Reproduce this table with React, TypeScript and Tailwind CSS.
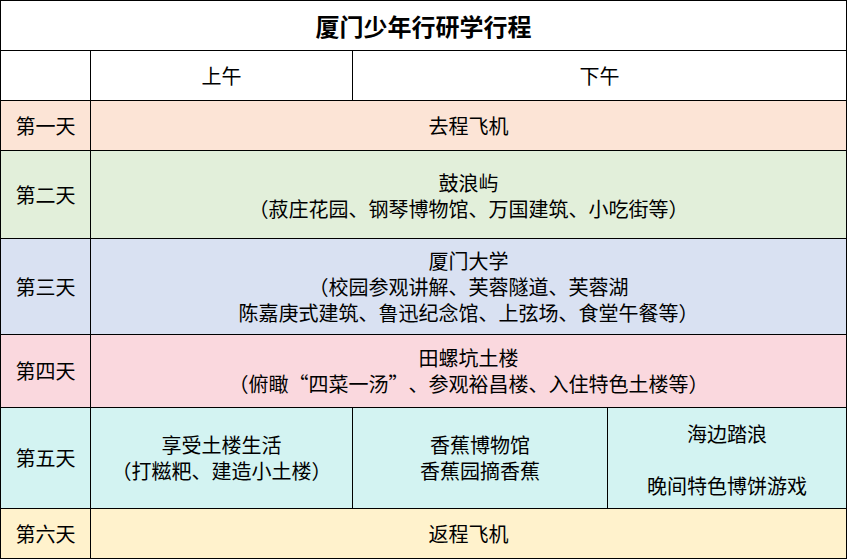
const font = { fontFamily: '"Noto Sans CJK SC", "Noto Sans", sans-serif' };

const cell = "flex flex-col items-center justify-center text-center text-[20px] leading-[26px] text-black";

const days = [
  { label: "第一天", bg: "bg-[#fce4d6]" },
  { label: "第二天", bg: "bg-[#e2efda]" },
  { label: "第三天", bg: "bg-[#d9e1f2]" },
  { label: "第四天", bg: "bg-[#fad8de]" },
  { label: "第五天", bg: "bg-[#d3f3f2]" },
  { label: "第六天", bg: "bg-[#fff2cc]" },
];

export default function App() {
  return (
    <div style={font} className="w-[847px] h-[559px] bg-white">
      <div className="grid grid-cols-[89px_261px_254px_238px] grid-rows-[49px_49px_49px_87px_95px_72px_100px_49px] gap-px bg-black p-px w-[847px] h-[559px]">
        <div className="col-span-4 flex items-center justify-center bg-white text-[24px] font-bold">
          厦门少年行研学行程
        </div>

        <div className="bg-white" />
        <div className={`${cell} bg-white`}>上午</div>
        <div className={`${cell} bg-white col-span-2`}>下午</div>

        <div className={`${cell} ${days[0].bg}`}>{days[0].label}</div>
        <div className={`${cell} ${days[0].bg} col-span-3`}>去程飞机</div>

        <div className={`${cell} ${days[1].bg}`}>{days[1].label}</div>
        <div className={`${cell} ${days[1].bg} col-span-3 pt-[2px]`}>
          <p>鼓浪屿</p>
          <p>（菽庄花园、钢琴博物馆、万国建筑、小吃街等）</p>
        </div>

        <div className={`${cell} ${days[2].bg}`}>{days[2].label}</div>
        <div className={`${cell} ${days[2].bg} col-span-3`}>
          <p>厦门大学</p>
          <p>（校园参观讲解、芙蓉隧道、芙蓉湖</p>
          <p>陈嘉庚式建筑、鲁迅纪念馆、上弦场、食堂午餐等）</p>
        </div>

        <div className={`${cell} ${days[3].bg}`}>{days[3].label}</div>
        <div className={`${cell} ${days[3].bg} col-span-3`}>
          <p>田螺坑土楼</p>
          <p>
            （俯瞰<span className="inline-block w-[20px] text-right">“</span>四菜一汤
            <span className="inline-block w-[20px] text-left">”</span>、参观裕昌楼、入住特色土楼等）
          </p>
        </div>

        <div className={`${cell} ${days[4].bg}`}>{days[4].label}</div>
        <div className={`${cell} ${days[4].bg}`}>
          <p>享受土楼生活</p>
          <p>（打糍粑、建造小土楼）</p>
        </div>
        <div className={`${cell} ${days[4].bg}`}>
          <p>香蕉博物馆</p>
          <p>香蕉园摘香蕉</p>
        </div>
        <div className={`${cell} ${days[4].bg} pt-[4px]`}>
          <p>海边踏浪</p>
          <p>&nbsp;</p>
          <p>晚间特色博饼游戏</p>
        </div>

        <div className={`${cell} ${days[5].bg}`}>{days[5].label}</div>
        <div className={`${cell} ${days[5].bg} col-span-3`}>返程飞机</div>
      </div>
    </div>
  );
}
